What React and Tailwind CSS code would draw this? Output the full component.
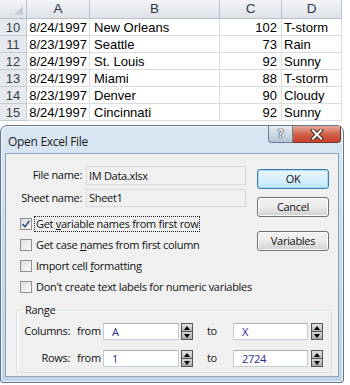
import React from "react";

const rows = [
  [10, "8/24/1997", "New Orleans", 102, "T-storm"],
  [11, "8/23/1997", "Seattle", 73, "Rain"],
  [12, "8/24/1997", "St. Louis", 92, "Sunny"],
  [13, "8/24/1997", "Miami", 88, "T-storm"],
  [14, "8/23/1997", "Denver", 90, "Cloudy"],
  [15, "8/24/1997", "Cincinnati", 92, "Sunny"],
];

function Sheet() {
  return (
    <div className="flex flex-col font-['Liberation_Sans',Arial,sans-serif] text-[13px] text-black">
      {/* column headers */}
      <div className="flex h-[19px] text-[13.5px] text-[#2f3a46]">
        <div className="w-[27px] flex items-end justify-end pr-[3px] pb-[3px] border-r border-b border-[#b9c2cc] bg-gradient-to-b from-[#f3f5f7] to-[#dde2e8]">
          <svg width="9" height="9" viewBox="0 0 9 9">
            <path d="M9 0 L9 9 L0 9 Z" fill="#c6ccd3" />
          </svg>
        </div>
        <div className="w-[63px] flex items-center justify-center border-r border-b border-[#b9c2cc] bg-gradient-to-b from-[#f3f5f7] to-[#dde2e8]">A</div>
        <div className="w-[130px] flex items-center justify-center border-r border-b border-[#b9c2cc] bg-gradient-to-b from-[#f3f5f7] to-[#dde2e8]">B</div>
        <div className="w-[62px] flex items-center justify-center border-r border-b border-[#b9c2cc] bg-gradient-to-b from-[#f3f5f7] to-[#dde2e8]">C</div>
        <div className="w-[60px] flex items-center justify-center border-r border-b border-[#b9c2cc] bg-gradient-to-b from-[#f3f5f7] to-[#dde2e8]">D</div>
      </div>
      {rows.map(([n, date, city, temp, sky]) => (
        <div key={n} className="flex h-[17px] leading-[17px]">
          <div className="w-[27px] text-center text-[13px] text-[#3a3f45] bg-[#e6e9ed] border-r border-b border-[#c5cbd2]">{n}</div>
          <div className="w-[63px] text-right pr-[2px] border-r border-b border-[#dadcdd]">{date}</div>
          <div className="w-[130px] pl-[4px] border-r border-b border-[#dadcdd]">{city}</div>
          <div className="w-[62px] text-right pr-[4px] border-r border-b border-[#dadcdd]">{temp}</div>
          <div className="w-[60px] pl-[2px] border-r border-b border-[#dadcdd]">{sky}</div>
        </div>
      ))}
    </div>
  );
}

function Check({ checked, focus, children }) {
  return (
    <div className="flex items-center h-[21px] ml-[14px]">
      <div className="w-[12px] h-[12px] border border-[#8e8f8f] bg-gradient-to-br from-[#dcdcdc] to-[#fbfbfb] flex items-center justify-center">
        {checked && (
          <svg width="10" height="10" viewBox="0 0 10 10">
            <path d="M1.5 5.2 L4 7.8 L8.5 1.8" fill="none" stroke="#3d4f8c" strokeWidth="1.7" />
          </svg>
        )}
      </div>
      <span className={"ml-[2px] px-[1px] leading-[14px] " + (focus ? "border border-dotted border-[#222]" : "border border-transparent")}>
        {children}
      </span>
    </div>
  );
}

function Btn({ primary, children, className }) {
  return (
    <div
      className={
        "w-[72px] h-[20px] rounded-[3px] flex items-center justify-center " +
        (primary
          ? "border border-[#3c7fb1] bg-gradient-to-b from-[#eaf6fd] via-[#d9f0fc] to-[#bee6fd] shadow-[inset_0_0_0_1px_#a7d9f5] "
          : "border border-[#707070] bg-gradient-to-b from-[#f2f2f2] via-[#ebebeb] to-[#cfcfcf] shadow-[inset_0_0_0_1px_#fcfcfc] ") +
        (className || "")
      }
    >
      {children}
    </div>
  );
}

function Spin() {
  return (
    <div className="w-[12px] h-[17px] flex flex-col border border-[#555] bg-[#9c9c9c]">
      <div className="flex-1 flex items-center justify-center bg-gradient-to-b from-[#e4e4e4] to-[#b5b5b5] border-b border-[#555]">
        <div className="w-0 h-0 border-l-[3.5px] border-r-[3.5px] border-b-[4px] border-l-transparent border-r-transparent border-b-black" />
      </div>
      <div className="flex-1 flex items-center justify-center bg-gradient-to-b from-[#d8d8d8] to-[#a9a9a9]">
        <div className="w-0 h-0 border-l-[3.5px] border-r-[3.5px] border-t-[4px] border-l-transparent border-r-transparent border-t-black" />
      </div>
    </div>
  );
}

function Field({ value, w }) {
  return (
    <div className={"h-[17px] bg-white border border-[#c4ccd6] border-t-[#abadb3] pl-[8px] leading-[15px] text-[#2a2a9a] " + w}>
      {value}
    </div>
  );
}

function RangeRow({ label, from, to, className }) {
  return (
    <div className={"flex items-center h-[17px] " + (className || "")}>
      <span className="w-[53px] text-right">{label}</span>
      <span className="ml-[7px] w-[21px]">from</span>
      <Field value={from} w="ml-[5px] w-[76px]" />
      <div className="ml-[2px]"><Spin /></div>
      <span className="ml-[14px] w-[10px]">to</span>
      <Field value={to} w="ml-[16px] w-[75px]" />
      <div className="ml-[3px]"><Spin /></div>
    </div>
  );
}

export default function App() {
  return (
    <div className="w-[350px] h-[385px] bg-white overflow-hidden">
      <Sheet />

      <div className="mt-[4px] w-[344px] h-[258px] rounded-t-[7px] rounded-b-[3px] border border-[#61758c] bg-gradient-to-b from-[#dae6f3] via-[#cbdbec] to-[#c0d3e8] shadow-[inset_0_0_0_1px_rgba(255,255,255,0.7)] flex flex-col font-['Open_Sans','Noto_Sans',sans-serif] text-[11px] tracking-[-0.3px] text-[#111]">
        {/* title bar */}
        <div className="h-[27px] flex items-start justify-between">
          <span className="mt-[7px] ml-[7px] text-[12px] text-[#1b1b1b]">Open Excel File</span>
          <div className="flex mr-[2px]">
            <div className="w-[25px] h-[17px] rounded-bl-[4px] border border-t-0 border-[#6b7d92] bg-gradient-to-b from-[#e6edf5] via-[#cdd8e5] to-[#b5c5d7] flex items-center justify-center">
              <span className="text-[12px] font-bold leading-none text-[#f4f6f9] [text-shadow:0_0_1px_#26323f,0_0_1px_#26323f,0_0_1px_#26323f]">?</span>
            </div>
            <div className="w-[48px] h-[17px] rounded-br-[4px] border border-l-0 border-t-0 border-[#6d3a30] bg-gradient-to-b from-[#e9a99b] via-[#d0634c] to-[#c8412a] flex items-center justify-center">
              <svg width="14" height="11" viewBox="0 0 14 11">
                <path d="M3 1.5 L11 9.5 M11 1.5 L3 9.5" stroke="#4a2a24" strokeWidth="4" strokeLinecap="square" />
                <path d="M3 1.5 L11 9.5 M11 1.5 L3 9.5" stroke="#ffffff" strokeWidth="2" strokeLinecap="square" />
              </svg>
            </div>
          </div>
        </div>

        {/* client area */}
        <div className="mx-[4px] mb-[5px] flex-1 border border-[#8fa3b9] bg-[#f0f0f0] flex flex-col">
          <div className="flex">
            <div className="w-[251px] pt-[12px]">
              <div className="flex items-center h-[19px]">
                <span className="w-[76px] text-right">File name:</span>
                <div className="ml-[4px] w-[160px] h-[19px] border border-[#d9d9d9] bg-[#f0f0f0] pl-[2px] leading-[17px]">IM Data.xlsx</div>
              </div>
              <div className="flex items-center h-[18px] mt-[4px]">
                <span className="w-[76px] text-right">Sheet name:</span>
                <div className="ml-[4px] w-[160px] h-[18px] border border-[#d9d9d9] bg-[#f0f0f0] pl-[2px] leading-[16px]">Sheet1</div>
              </div>
              <div className="mt-[6px]">
                <Check checked focus>
                  Get <u>v</u>ariable names from first row
                </Check>
                <Check>
                  Get case <u>n</u>ames from first column
                </Check>
                <Check>
                  Import cell <u>f</u>ormatting
                </Check>
                <Check>Don't create text labels for numeric variables</Check>
              </div>
            </div>
            <div className="pt-[15px] flex flex-col">
              <Btn primary>OK</Btn>
              <Btn className="mt-[8px]">Cancel</Btn>
              <Btn className="mt-[14px]">Variables</Btn>
            </div>
          </div>

          <fieldset className="mt-[5px] ml-[10px] w-[316px] h-[71px] border border-[#d5dfe5] rounded-[3px] shadow-[inset_1px_1px_0_#fff] px-0">
            <legend className="ml-[5px] px-[3px] leading-[16px]">Range</legend>
            <RangeRow className="mt-[5px]" label="Columns:" from="A" to="X" />
            <RangeRow className="mt-[10px]" label="Rows:" from="1" to="2724" />
          </fieldset>
        </div>
      </div>
    </div>
  );
}
